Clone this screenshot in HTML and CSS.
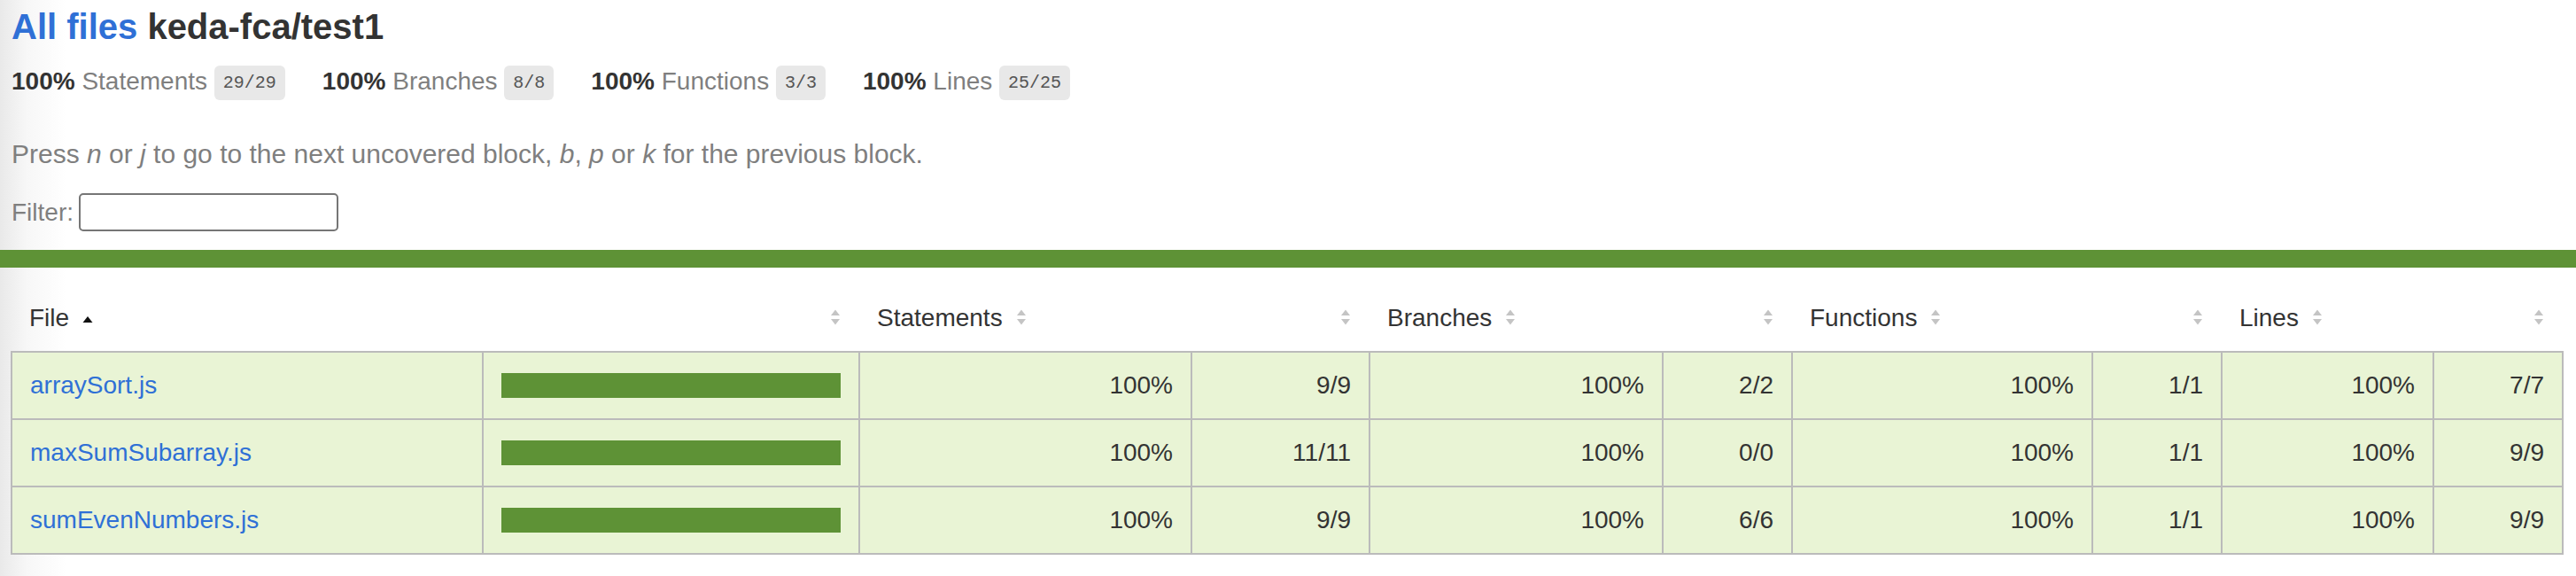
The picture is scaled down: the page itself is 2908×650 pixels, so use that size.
FILE: index.html
```html
<!DOCTYPE html>
<html lang="en">
<head>
<meta charset="utf-8">
<title>Code coverage report for keda-fca/test1</title>
<link rel="stylesheet" href="styles.css">
</head>
<body>
<div class="summary">
  <h1 class="title"><a class="link" href="#">All files</a> keda-fca/test1</h1>
  <div class="stats">
    <div class="stat"><strong class="strong">100%</strong> <span class="quiet">Statements</span> <span class="fraction">29/29</span></div>
    <div class="stat"><strong class="strong">100%</strong> <span class="quiet">Branches</span> <span class="fraction">8/8</span></div>
    <div class="stat"><strong class="strong">100%</strong> <span class="quiet">Functions</span> <span class="fraction">3/3</span></div>
    <div class="stat"><strong class="strong">100%</strong> <span class="quiet">Lines</span> <span class="fraction">25/25</span></div>
  </div>
  <p class="quiet help">Press <em>n</em> or <em>j</em> to go to the next uncovered block, <em>b</em>, <em>p</em> or <em>k</em> for the previous block.</p>
  <div class="quiet filter"><label class="filter-label" for="fileSearch">Filter:</label><input class="search" type="search" id="fileSearch"></div>
</div>
<div class="status-line"></div>
<div class="table-wrap">
<table class="coverage-summary">
  <colgroup>
    <col class="c-file"><col class="c-pic">
    <col class="c-spct"><col class="c-sabs">
    <col class="c-bpct"><col class="c-babs">
    <col class="c-fpct"><col class="c-fabs">
    <col class="c-lpct"><col class="c-labs">
  </colgroup>
  <thead>
    <tr>
      <th class="file">File<span class="sorter"><svg class="sort-svg" width="14" height="20" viewBox="0 0 14 20"><polygon class="arrow-on" points="1.5,16 7,9 12.5,16"/></svg></span></th>
      <th class="pic"><span class="sorter"><svg class="sort-svg" width="14" height="20" viewBox="0 0 14 20"><polygon class="arrow-off" points="2,8 7,1.5 12,8"/><polygon class="arrow-off" points="2,12 7,18.5 12,12"/></svg></span></th>
      <th class="pct">Statements<span class="sorter"><svg class="sort-svg" width="14" height="20" viewBox="0 0 14 20"><polygon class="arrow-off" points="2,8 7,1.5 12,8"/><polygon class="arrow-off" points="2,12 7,18.5 12,12"/></svg></span></th>
      <th class="abs"><span class="sorter"><svg class="sort-svg" width="14" height="20" viewBox="0 0 14 20"><polygon class="arrow-off" points="2,8 7,1.5 12,8"/><polygon class="arrow-off" points="2,12 7,18.5 12,12"/></svg></span></th>
      <th class="pct">Branches<span class="sorter"><svg class="sort-svg" width="14" height="20" viewBox="0 0 14 20"><polygon class="arrow-off" points="2,8 7,1.5 12,8"/><polygon class="arrow-off" points="2,12 7,18.5 12,12"/></svg></span></th>
      <th class="abs"><span class="sorter"><svg class="sort-svg" width="14" height="20" viewBox="0 0 14 20"><polygon class="arrow-off" points="2,8 7,1.5 12,8"/><polygon class="arrow-off" points="2,12 7,18.5 12,12"/></svg></span></th>
      <th class="pct">Functions<span class="sorter"><svg class="sort-svg" width="14" height="20" viewBox="0 0 14 20"><polygon class="arrow-off" points="2,8 7,1.5 12,8"/><polygon class="arrow-off" points="2,12 7,18.5 12,12"/></svg></span></th>
      <th class="abs"><span class="sorter"><svg class="sort-svg" width="14" height="20" viewBox="0 0 14 20"><polygon class="arrow-off" points="2,8 7,1.5 12,8"/><polygon class="arrow-off" points="2,12 7,18.5 12,12"/></svg></span></th>
      <th class="pct">Lines<span class="sorter"><svg class="sort-svg" width="14" height="20" viewBox="0 0 14 20"><polygon class="arrow-off" points="2,8 7,1.5 12,8"/><polygon class="arrow-off" points="2,12 7,18.5 12,12"/></svg></span></th>
      <th class="abs"><span class="sorter"><svg class="sort-svg" width="14" height="20" viewBox="0 0 14 20"><polygon class="arrow-off" points="2,8 7,1.5 12,8"/><polygon class="arrow-off" points="2,12 7,18.5 12,12"/></svg></span></th>
    </tr>
  </thead>
  <tbody>
    <tr class="high">
      <td class="file"><a class="link" href="#">arraySort.js</a></td>
      <td class="pic"><div class="chart"><div class="cover-fill"></div></div></td>
      <td class="pct">100%</td><td class="abs">9/9</td>
      <td class="pct">100%</td><td class="abs">2/2</td>
      <td class="pct">100%</td><td class="abs">1/1</td>
      <td class="pct">100%</td><td class="abs">7/7</td>
    </tr>
    <tr class="high">
      <td class="file"><a class="link" href="#">maxSumSubarray.js</a></td>
      <td class="pic"><div class="chart"><div class="cover-fill"></div></div></td>
      <td class="pct">100%</td><td class="abs">11/11</td>
      <td class="pct">100%</td><td class="abs">0/0</td>
      <td class="pct">100%</td><td class="abs">1/1</td>
      <td class="pct">100%</td><td class="abs">9/9</td>
    </tr>
    <tr class="high">
      <td class="file"><a class="link" href="#">sumEvenNumbers.js</a></td>
      <td class="pic"><div class="chart"><div class="cover-fill"></div></div></td>
      <td class="pct">100%</td><td class="abs">9/9</td>
      <td class="pct">100%</td><td class="abs">6/6</td>
      <td class="pct">100%</td><td class="abs">1/1</td>
      <td class="pct">100%</td><td class="abs">9/9</td>
    </tr>
  </tbody>
</table>
</div>
</body>
</html>
```

FILE: styles.css
```css
* { box-sizing: border-box; }

html, body { margin: 0; padding: 0; }

body {
  font-family: "Liberation Sans", Arial, Helvetica, sans-serif;
  font-size: 28px;
  line-height: 32px;
  color: #333;
  background: linear-gradient(90deg, #e9e9e9 0, #f7f7f7 30px, #ffffff 75px);
}

.link { color: #2f70d6; text-decoration: none; }

.summary {
  padding: 6px 14px 20px 12px;
}

.title {
  margin: 0;
  font-size: 40px;
  line-height: 48px;
  font-weight: bold;
  padding-left: 1px;
}

.stats {
  display: flex;
  gap: 42px;
  padding: 22px 0 20px 1px;
  line-height: 32px;
}

.stat { white-space: nowrap; }

.strong { font-weight: bold; }

.quiet { color: #7f7f7f; }

.fraction {
  font-family: "Liberation Mono", "Courier New", monospace;
  font-size: 20px;
  color: #555;
  background: #e8e8e8;
  padding: 8px 10px;
  border-radius: 6px;
  vertical-align: middle;
}

.help {
  margin: 28px 0 28px 1px;
  font-size: 30px;
}

.filter {
  display: flex;
  align-items: center;
  gap: 6px;
  height: 44px;
  padding-left: 1px;
}

.search {
  width: 293px;
  height: 43px;
  border: 2px solid #767676;
  border-radius: 5px;
  background: #fff;
  font-size: 26px;
  margin: 0;
  padding: 2px 6px;
}

.status-line {
  height: 20px;
  background: #5e9236;
}

.table-wrap {
  padding: 20px 14px 0 12px;
}

.coverage-summary {
  border-collapse: collapse;
  table-layout: fixed;
  width: 100%;
}

.c-file { width: 532px; }
.c-pic { width: 425px; }
.c-spct { width: 375px; }
.c-sabs { width: 201px; }
.c-bpct { width: 331px; }
.c-babs { width: 146px; }
.c-fpct { width: 339px; }
.c-fabs { width: 146px; }
.c-lpct { width: 239px; }
.c-labs { width: 146px; }

.coverage-summary th,
.coverage-summary td {
  padding: 20px;
  line-height: 34px;
}

.coverage-summary th {
  text-align: left;
  font-weight: normal;
  white-space: nowrap;
}

.coverage-summary th.pic,
.coverage-summary th.abs,
.coverage-summary td.pct,
.coverage-summary td.abs { text-align: right; }

.coverage-summary tbody { border: 2px solid #bbb; }
.coverage-summary tbody tr { border-bottom: 2px solid #bbb; }
.coverage-summary td { border-right: 2px solid #bbb; }
.coverage-summary td:last-child { border-right: none; }
.coverage-summary td.file { white-space: nowrap; }

.high td { background: #e9f4d5; }

.sorter {
  display: inline-block;
  width: 14px;
  height: 20px;
  margin-left: 14px;
  vertical-align: baseline;
}

.sort-svg { display: block; }

.arrow-on { fill: #111; }
.arrow-off { fill: #c4c4c4; }

.chart {
  line-height: 0;
  border: 2px solid #5e9236;
}

.cover-fill {
  height: 24px;
  width: 100%;
  background: #5e9236;
}
```
